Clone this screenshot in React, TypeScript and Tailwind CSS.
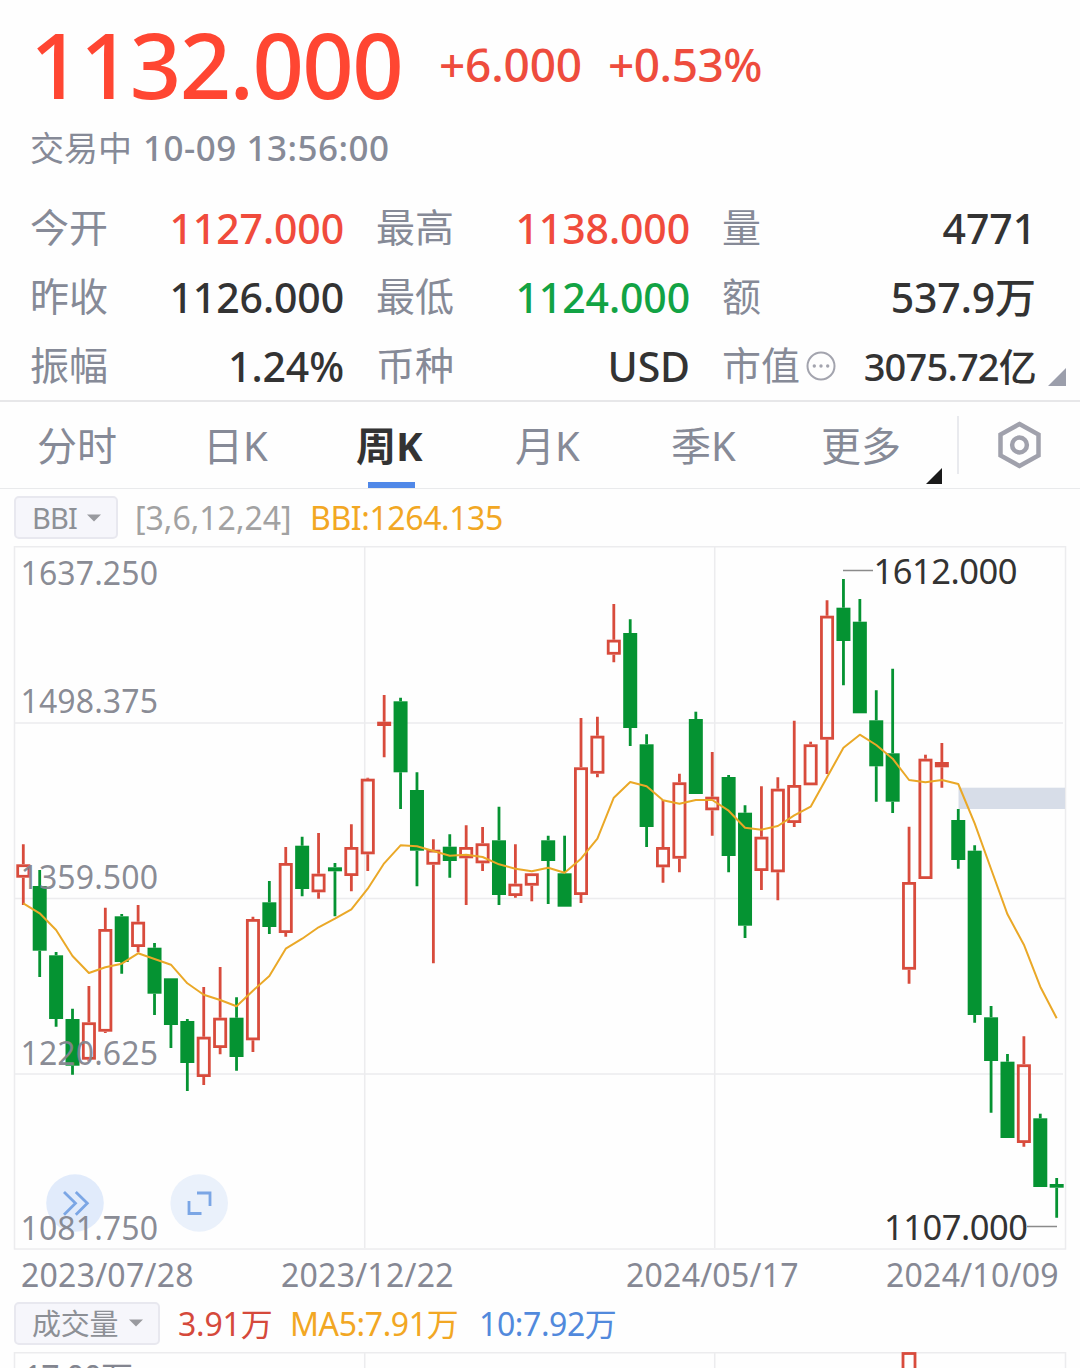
import React from "react";
import clsx from "clsx";

// [high, body top, body bottom, low, direction]
type Candle = [number, number, number, number, "up" | "down"];

const candles: Candle[] = [
  [844.3, 864.3, 877.7, 905, "up"],
  [870, 886, 950.7, 977, "down"],
  [952, 955.3, 1019, 1026.7, "down"],
  [1008.7, 1019, 1065.7, 1074.7, "down"],
  [986, 1022.3, 1059.7, 1061, "up"],
  [907.7, 929, 1031.7, 1033, "up"],
  [914, 916.3, 962, 973.7, "down"],
  [905, 921.7, 947, 952.3, "up"],
  [943, 947.7, 993.7, 1015, "down"],
  [978.3, 978.3, 1025, 1048, "down"],
  [1019, 1021, 1063, 1091, "down"],
  [987, 1036.7, 1077, 1085, "up"],
  [967, 1017.7, 1048, 1054.3, "up"],
  [997.3, 1017.7, 1057, 1070.7, "down"],
  [916.7, 919, 1040.3, 1052, "up"],
  [881, 902.3, 927, 934, "down"],
  [847, 863, 933, 936.7, "up"],
  [836.7, 845.7, 889, 896.3, "down"],
  [833, 873.7, 892.3, 898.7, "up"],
  [863, 867.3, 871.3, 916.3, "down"],
  [824.3, 847, 876, 891.3, "up"],
  [777.7, 778.7, 854.3, 871, "up"],
  [695, 721.7, 726, 757.3, "up"],
  [697.7, 701.3, 772.3, 809, "down"],
  [772.3, 790, 850.7, 886.3, "down"],
  [839.3, 849.7, 864.7, 963.3, "up"],
  [834.3, 846.7, 861, 877.7, "down"],
  [825.3, 847, 858.3, 905, "up"],
  [827, 843.3, 863.3, 871, "up"],
  [806.7, 840.3, 895, 905, "down"],
  [844.3, 883.7, 896, 897.7, "up"],
  [873.3, 873.3, 885.7, 901.3, "up"],
  [835.7, 840.3, 861, 904, "down"],
  [835.7, 873.3, 906.7, 906.7, "down"],
  [718, 767.3, 895, 903, "up"],
  [716.7, 735.7, 773.7, 777.3, "up"],
  [604, 639.7, 654.7, 662.3, "up"],
  [619.3, 633, 728, 746, "down"],
  [734.3, 744.3, 827, 847, "down"],
  [800, 847, 867.3, 882.7, "up"],
  [773.7, 782.3, 858.7, 872.3, "up"],
  [711.7, 719, 794, 794, "down"],
  [752, 796.7, 810.3, 835.7, "up"],
  [775, 777, 856, 872.3, "down"],
  [805.3, 812.7, 925.7, 938, "down"],
  [786.3, 836.7, 871, 890, "up"],
  [777.3, 788.7, 872.3, 900.3, "up"],
  [720.7, 785, 823, 827, "up"],
  [741.7, 744.3, 785.3, 785.3, "up"],
  [600.3, 615.7, 739.7, 774, "up"],
  [579, 607.7, 641, 685.3, "down"],
  [599, 621.7, 713.3, 713.3, "down"],
  [690.3, 720.3, 766.3, 801.7, "down"],
  [668.7, 753.3, 801.7, 813, "down"],
  [826.7, 882, 969.7, 983.7, "up"],
  [754.7, 758.7, 879, 879, "up"],
  [743, 762, 767.3, 787.7, "up"],
  [809, 820, 860, 868.7, "down"],
  [845.3, 850.7, 1015, 1022.7, "down"],
  [1006, 1017.3, 1061, 1112.7, "down"],
  [1054, 1061.7, 1138, 1138, "down"],
  [1036.3, 1064.3, 1143, 1146.7, "up"],
  [1113.7, 1118.3, 1187, 1187, "down"],
  [1178, 1184, 1187.7, 1217.7, "down"],
];

const bbi = [
  903.3, 913.3, 930, 956, 973, 967.3, 963.7, 953.3, 959, 964.7, 983.3, 994.7, 1000, 1006.3, 990.7, 976,
  948.7, 938.7, 927.3, 918.7, 909.3, 888.7, 863.3, 845.3, 846.3, 851, 855.7, 854.7, 857, 864.3, 868.7, 871.3,
  867.7, 872.7, 858.7, 838.7, 797.7, 782, 786.3, 800.3, 803.7, 800, 800, 810.7, 827.7, 829.7, 826, 815.3,
  806.7, 777.3, 747.7, 734.7, 745, 758.7, 780, 782.3, 780, 784, 823.3, 869, 914.3, 944.7, 986.7, 1018.3,
];

const priceLabels = [
  { y: 584.5, text: "1637.250" },
  { y: 713, text: "1498.375" },
  { y: 889, text: "1359.500" },
  { y: 1064.5, text: "1220.625" },
  { y: 1239.7, text: "1081.750" },
];

const quotes = [
  [
    { label: "今开", value: "1127.000", color: "text-[#f04b3c]" },
    { label: "最高", value: "1138.000", color: "text-[#f04b3c]" },
    { label: "量", value: "4771", color: "text-[#333]" },
  ],
  [
    { label: "昨收", value: "1126.000", color: "text-[#333]" },
    { label: "最低", value: "1124.000", color: "text-[#12a344]" },
    { label: "额", value: "537.9万", color: "text-[#333]" },
  ],
  [
    { label: "振幅", value: "1.24%", color: "text-[#333]" },
    { label: "币种", value: "USD", color: "text-[#333]" },
    { label: "市值", value: "3075.72亿", color: "text-[#333]", more: true },
  ],
];

const tabs = [
  { label: "分时", width: "w-[166px]" },
  { label: "日K", width: "w-[153px]" },
  { label: "周K", width: "w-[159px]", active: true },
  { label: "月K", width: "w-[156px]" },
  { label: "季K", width: "w-[150px]" },
  { label: "更多", width: "w-[136px]" },
];

const candleX = (i: number) => 23.3 + i * 16.403;

const PriceHeader = () => (
  <header className="h-[192px] pt-[19px] pl-[30px]">
    <div className="flex h-[106px] whitespace-nowrap">
      <span className="w-[409px] text-[90px] leading-[90px] font-medium tracking-[-1.6px] text-[#ff4632]">1132.000</span>
      <span className="w-[169px] pt-[22px] text-[46px] leading-[46px] font-medium tracking-[-0.2px] text-[#ee4c3d]">+6.000</span>
      <span className="pt-[22px] text-[46px] leading-[46px] font-medium tracking-[-0.5px] text-[#ee4c3d]">+0.53%</span>
    </div>
    <div className="flex items-baseline text-[34px] leading-[46px] whitespace-nowrap text-[#868a97]">
      <span className="w-[113px]">交易中</span>
      <span className="text-[35px] font-medium tracking-[0.5px]">10-09 13:56:00</span>
    </div>
  </header>
);

const QuoteGrid = () => (
  <section className="relative h-[210px] border-b-2 border-[#e7e7e9] pl-[30px]">
    {quotes.map((row, r) => (
      <div key={r} className="flex h-[69px] gap-[32px]">
        {row.map((cell: any) => (
          <div key={cell.label} className="flex w-[314px] items-center justify-between whitespace-nowrap">
            <span className="flex items-center gap-[6px] text-[39px] leading-[60px] text-[#868a97]">
              {cell.label}
              {cell.more && (
                <svg className="mt-[3px]" width="30" height="30" viewBox="0 0 30 30" fill="#a3a4ae">
                  <circle cx="15" cy="15" r="13.5" fill="none" stroke="#a3a4ae" strokeWidth="2" />
                  <circle cx="8.3" cy="15" r="1.7" />
                  <circle cx="15" cy="15" r="1.7" />
                  <circle cx="21.7" cy="15" r="1.7" />
                </svg>
              )}
            </span>
            <span
              className={clsx(
                "pt-[2px] leading-[60px] font-medium",
                cell.more ? "text-[38px] tracking-[-0.8px]" : "text-[41px] tracking-[-0.1px]",
                cell.color
              )}
            >
              {cell.value}
            </span>
          </div>
        ))}
      </div>
    ))}
    <svg className="absolute right-[14px] bottom-[14px]" width="18" height="18" viewBox="0 0 18 18">
      <path d="M18 0V18H0Z" fill="#9b9eab" />
    </svg>
  </section>
);

const PeriodTabs = () => (
  <nav className="flex h-[87px] border-b border-[#e9eaec] pl-[37px]">
    {tabs.map((tab) => (
      <div
        key={tab.label}
        className={clsx(
          "relative text-[40px] leading-[87px] whitespace-nowrap",
          tab.width,
          tab.active ? "font-bold text-[#333]" : "text-[#868a97]"
        )}
      >
        {tab.label}
        {tab.active && <div className="absolute bottom-0 left-[12px] h-[6px] w-[47px] bg-[#5088e8]" />}
        {tab.label === "更多" && (
          <svg className="absolute right-[15px] bottom-[4px]" width="16" height="16" viewBox="0 0 16 16">
            <path d="M16 0V16H0Z" fill="#1a1a1a" />
          </svg>
        )}
      </div>
    ))}
    <div className="mt-[14px] h-[58px] w-[2px] bg-[#e9eaee]" />
    <svg className="mt-[17px] ml-[36px]" width="49" height="52" viewBox="0 0 48 52" fill="none" stroke="#a0a1ac" strokeWidth="4.5">
      <path d="M24 5L43 15.5V36.5L24 47L5 36.5V15.5Z" />
      <circle cx="24" cy="26" r="7.4" />
    </svg>
  </nav>
);

const Picker = ({ label, className }: { label: string; className: string }) => (
  <div
    className={clsx(
      "flex h-[43px] items-center justify-between rounded-[5px] border-2 border-[#e8e8ef] bg-[#f6f6fb] pr-[15px] pl-[16px] text-[#8d9096]",
      className
    )}
  >
    <span className="leading-[39px]">{label}</span>
    <svg width="14" height="8" viewBox="0 0 14 8">
      <path d="M0 0.5H14L7 7.5Z" fill="#999a9f" />
    </svg>
  </div>
);

const KLineChart = () => (
  <svg className="block" width="1080" height="704" viewBox="0 546 1080 704">
    <g stroke="#ececee" strokeWidth="1.5" fill="none">
      <path d="M364.7 547V1248M714.7 547V1248M15 723H1063M15 898.5H1065M15 1074H1063" />
      <rect x="14.5" y="546.7" width="1051" height="702.3" />
    </g>
    <rect x="958.5" y="787.7" width="106.5" height="21.3" fill="#d7dde8" />
    {candles.map(([high, top, bottom, low, dir], i) => {
      const x = candleX(i);
      const up = dir === "up";
      const color = up ? "#d84b3c" : "#059332";
      const flat = bottom - top < 6;
      return (
        <g key={i}>
          <path d={`M${x} ${high}V${top}M${x} ${bottom}V${low}`} stroke={color} strokeWidth="2.8" />
          {up && !flat ? (
            <rect x={x - 5.6} y={top + 1.4} width="11.2" height={bottom - top - 2.8} fill="none" stroke={color} strokeWidth="2.8" />
          ) : (
            <rect x={x - 7} y={top} width="14" height={bottom - top} fill={color} />
          )}
        </g>
      );
    })}
    <polyline
      points={bbi.map((y, i) => `${candleX(i)},${y}`).join(" ")}
      fill="none"
      stroke="#eaa827"
      strokeWidth="2"
      strokeLinejoin="round"
    />
    <circle cx="75" cy="1203" r="28.8" fill="#e1ebfb" />
    <circle cx="199.2" cy="1203" r="28.8" fill="#eaf1fb" />
    <g fill="none" stroke="#7ba6e5" strokeWidth="2.8">
      <path d="M64 1192L75.5 1203.3L64 1214.7M75.8 1192L87.3 1203.3L75.8 1214.7" />
      <path d="M197 1193H210V1206M189 1201V1213.5H201.5" />
    </g>
    <g fontSize="32" fill="#83858f" fillOpacity="0.95">
      {priceLabels.map((label) => (
        <text key={label.text} x="20.5" y={label.y} textLength="137.5">
          {label.text}
        </text>
      ))}
    </g>
    <path d="M843 570.5H873M1027 1226.5H1057" stroke="#8b8b8b" strokeWidth="1.5" />
    <g fontSize="34.5" fill="#333">
      <text x="873.5" y="584" textLength="144">
        1612.000
      </text>
      <text x="884" y="1239.7" textLength="144">
        1107.000
      </text>
    </g>
  </svg>
);

export default function App() {
  return (
    <div className="h-[1368px] w-[1080px] overflow-hidden bg-[#fefefe] font-['Noto_Sans','Noto_Sans_CJK_SC',sans-serif]">
      <PriceHeader />
      <QuoteGrid />
      <PeriodTabs />
      <div className="flex h-[57px] items-center pl-[14px] text-[32px] leading-[40px] whitespace-nowrap">
        <Picker label="BBI" className="w-[104px] text-[29px] tracking-[-0.8px]" />
        <span className="ml-[17px] w-[175px] text-[#a2a2a2]">[3,6,12,24]</span>
        <span className="tracking-[-0.4px] text-[#f2a723]">BBI:1264.135</span>
      </div>
      <KLineChart />
      <div className="flex h-[50px] pl-[21px] text-[32px] leading-[50px] tracking-[0.25px] whitespace-nowrap text-[#868894]">
        <span className="w-[260px]">2023/07/28</span>
        <span className="w-[345px]">2023/12/22</span>
        <span className="w-[260px]">2024/05/17</span>
        <span>2024/10/09</span>
      </div>
      <div className="flex h-[46px] items-center pl-[14px] text-[32px] leading-[40px] tracking-[-0.2px] whitespace-nowrap">
        <Picker label="成交量" className="w-[146px] text-[29px]" />
        <span className="mt-[2px] ml-[18px] w-[112px] text-[#d5493b]">3.91万</span>
        <span className="mt-[2px] w-[189px] tracking-[-0.4px] text-[#f2a723]">MA5:7.91万</span>
        <span className="mt-[2px] tracking-[-0.4px] text-[#5189dc]">10:7.92万</span>
      </div>
      <svg className="block" width="1080" height="22" viewBox="0 1346 1080 22">
        <path d="M14.5 1368V1352.7H1065.5V1368M364.7 1353V1368M714.7 1353V1368" fill="none" stroke="#ececee" strokeWidth="1.5" />
        <rect x="903" y="1353.5" width="12" height="40" fill="none" stroke="#d84b3c" strokeWidth="2.8" />
        <text x="24" y="1389" fontSize="32" textLength="109" fill="#83858f">
          17.00万
        </text>
      </svg>
    </div>
  );
}
